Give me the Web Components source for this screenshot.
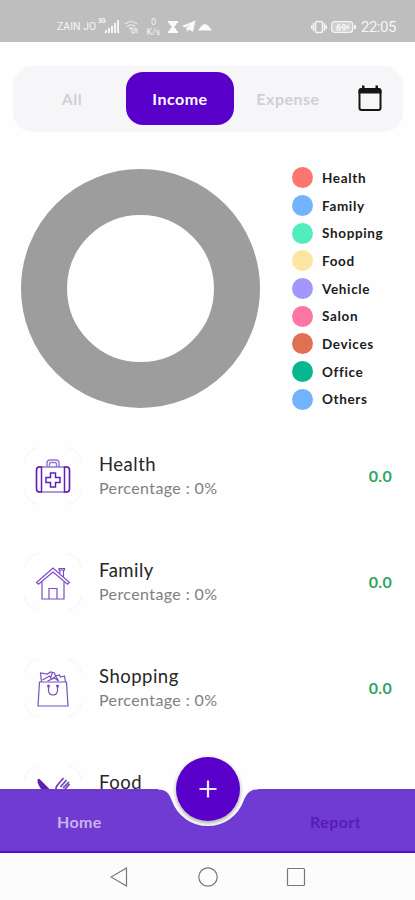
<!DOCTYPE html>
<html lang="en">
<head>
<meta charset="utf-8">
<meta name="viewport" content="width=device-width, initial-scale=1">
<title>Report</title>
<style>
  body {
    margin: 0;
    background: #fefefe;
    font-family: Lato, "Open Sans", sans-serif;
    overflow: hidden;
  }
</style>
</head>
<body>
<report-app></report-app>

<script>
function define(name, html, setup) {
  const template = document.createElement('template');
  template.innerHTML = html;
  customElements.define(name, class extends HTMLElement {
    constructor() {
      super();
      this.attachShadow({ mode: 'open' }).appendChild(template.content.cloneNode(true));
    }
    connectedCallback() {
      if (setup) setup(this, this.shadowRoot);
    }
  });
}

define('status-bar', `
  <style>
    :host {
      display: flex;
      align-items: center;
      justify-content: space-between;
      box-sizing: border-box;
      height: 42px;
      padding: 11px 19px 0 57px;
      background: #bebebe;
      color: #f5f5f5;
      font-family: Roboto, sans-serif;
    }
    .side { display: flex; align-items: center; }
    .carrier { font-size: 10.500px; width: 41px; white-space: nowrap; }
    .gen { font-size: 6.500px; font-weight: 700; align-self: flex-start; width: 7px; letter-spacing: -.5px; }
    .speed { font-size: 9px; line-height: 10px; text-align: center; width: 15px; margin: 0 6px 0 6px; }
    .time { font-size: 15px; width: 35px; margin-left: 4px; letter-spacing: -.5px; white-space: nowrap; }
    svg { display: block; }
  </style>
  <div class="side">
    <span class="carrier">ZAIN JO</span>
    <span class="gen">3G</span>
    <svg width="15" height="14" fill="#f5f5f5"><path d="M0 10h2v3H0zM3 8h2v5H3zM6 6h2v7H6zM9 3h2v10H9zM12 0h2v13h-2z"/></svg>
    <svg width="16" height="14" fill="none" stroke="#ececec" stroke-width="1.200" style="margin-left:4px"><path d="M1 4q6-5 12 0M3 6.500q4-3.500 8 0M5 9q2-2 4 0"/><path d="M7 10h6l-2-2M14 12H8l2 2"/></svg>
    <div class="speed"><div>0</div><div>K/s</div></div>
    <svg width="12" height="14" fill="#fafafa"><path d="M1 1h10v2H10q-1 2.500-3 4 2 1.500 3 4h1v2H1v-2h1q1-2.500 3-4-2-1.500-3-4H1z"/></svg>
    <svg width="14" height="13" fill="#fafafa" style="margin-left:3px"><path d="M0 6L13.500.500 11 12 7 9.500 5 11.500 4.500 8 9 4 3.500 7.500z"/></svg>
    <svg width="14" height="8" fill="#fafafa" style="margin-left:2px"><path d="M0 7.500L3 3.500q4-5 8 0l3 4z"/></svg>
  </div>
  <div class="side">
    <svg width="17" height="14" fill="none" stroke="#f5f5f5" stroke-width="1.500"><rect x="4.500" y="1.500" width="7" height="11" rx="1.500"/><path d="M2.500 3v8M13.500 3v8M.7 5v4M15.300 5v4"/></svg>
    <svg width="26" height="14" style="margin-left:3px"><rect x=".7" y="1.700" width="21" height="10.600" rx="3" fill="#cfcfcf" stroke="#f5f5f5" stroke-width="1.300"/><path d="M24 5v4" stroke="#f5f5f5" stroke-width="2"/><text x="5" y="10.500" font-size="9" font-weight="700" fill="#fafafa">69</text><path d="M18 3l-3 4.500h2L16 11l3-4.500h-2z" fill="#fafafa"/></svg>
    <span class="time">22:05</span>
  </div>
`);

define('filter-tabs', `
  <style>
    :host {
      display: grid;
      grid-template-columns: 108px 108px 108px 1fr;
      align-items: center;
      box-sizing: border-box;
      height: 66px;
      margin: 24px 12px 0 13px;
      padding: 0 5px 1px;
      border-radius: 20px;
      background: #f6f6f9;
    }
    ::slotted(*) {
      height: 53px;
      line-height: 54px;
      text-align: center;
      color: #d0d0d2;
      font-size: 16px;
      font-weight: 700;
      letter-spacing: .5px;
    }
    ::slotted([active]) {
      background: #5a00cb;
      border-radius: 17px;
      color: #fff;
    }
    svg { display: block; justify-self: center; }
  </style>
  <slot></slot>
  <svg width="24" height="27" viewBox="0 0 24 27"><path d="M.500 8.500h23V6q0-3-2.500-3h-1V.500h-2.500V3h-11V.500H4V3H3Q.500 3 .500 6z" fill="#151515"/><rect x="1.500" y="4.500" width="21" height="20.500" rx="2" fill="none" stroke="#151515" stroke-width="2"/></svg>
`);

define('donut-chart', `
  <style>
    :host {
      display: block;
      box-sizing: border-box;
      width: 239px;
      height: 239px;
      border: 46px solid #9d9d9d;
      border-radius: 50%;
    }
  </style>
`);

define('legend-item', `
  <style>
    :host {
      display: flex;
      align-items: center;
      gap: 9px;
      height: 27.700px;
      color: #1c1c1c;
      font-size: 13.500px;
      font-weight: 700;
      letter-spacing: .650px;
    }
    .dot { width: 21px; height: 21px; border-radius: 50%; }
  </style>
  <span class="dot"></span>
  <slot></slot>
`, (el, root) => {
  root.querySelector('.dot').style.background = el.getAttribute('color');
});

const icons = {
  health: `
    <g stroke="#9375d2" stroke-width="1.400"><path d="M11.500 8V4q0-3 3-3h6q3 0 3 3v4M14 8V5q0-1.500 1.500-1.500h4Q21 3.500 21 5v3"/><rect x="1" y="8" width="33" height="25" rx="3.500"/></g>
    <g stroke="#6320ba" stroke-width="1.500"><path d="M1 11v19q0 3 2.500 3H6V8H3.500Q1 8 1 11zM34 11v19q0 3-2.500 3H29V8h2.500Q34 8 34 11z"/><path d="M15 14h5v4.500h4.500v5H20V28h-5v-4.500h-4.500v-5H15z"/></g>`,
  family: `
    <g stroke="#7c4bc8" stroke-width="1.200"><path d="M1 17.500L17.500 3 34 17.500l-2 1.700L17.500 7 3 19.200zM6.500 17v17h22V17M13.500 34V23.500h8V34M24.500 8V5h3.500v6.500M23.500 3.500h5.500V5h-5.500z"/></g>`,
  shopping: `
    <g stroke="#7650bd" stroke-width="1.200"><path d="M4 11h27l1.500 24h-30z"/><path d="M6 11l-1-9 7 1 3-2 4 1 1 3 4-1 1 2 4-1 1 6M7 9l7-4 2 3 5-3M12 10l7-3 4 3M21 6l2 4M17 1l-2 6"/><path d="M13 16v3q0 5 4.500 5t4.500-5v-3"/></g>
    <circle cx="13" cy="15" r="1.500" fill="#7650bd"/><circle cx="22" cy="15" r="1.500" fill="#7650bd"/>`,
  food: `
    <path d="M2 4q0-3 2-2l15 15-3 3q-5-1-8-5Q2 8 2 4z" fill="#5d20aa"/>
    <path d="M4 33L22 14M28 1l-6 7q-3 4 0 6 2 3 6 0l6-7M31 3l-6 7M33.500 5l-6 6" stroke="#7040b4" stroke-width="1.700"/>
    <path d="M18 20l13 13" stroke="#5d20aa" stroke-width="4"/>`
};

define('category-row', `
  <style>
    :host {
      display: grid;
      grid-template-columns: 58px 1fr auto;
      column-gap: 17px;
      align-items: center;
      height: 106px;
      padding: 0 23px 0 24px;
    }
    svg { display: block; fill: none; }
    .name { color: #262626; font-size: 18.500px; line-height: 24px; letter-spacing: .5px; }
    .percent { color: #808080; font-size: 16px; line-height: 23px; height: 23px; letter-spacing: .4px; }
    .amount { color: #30a560; font-size: 16px; font-weight: 700; letter-spacing: .3px; }
  </style>
  <div class="tile"></div>
  <div>
    <div class="name"></div>
    <div class="percent"><slot></slot></div>
  </div>
  <div class="amount"></div>
`, (el, root) => {
  // faint rounded corners of the tile, with the icon in the middle
  root.querySelector('.tile').innerHTML =
    '<svg width="58" height="58" viewBox="-11.500 -12 58 58">' +
    '<path d="M-11 3Q-9-9 3-11.500M32-11.500Q44-9 46 3M46 31Q44 43 32 45.500M3 45.500Q-9 43-11 31" stroke="#f3f3f3"/>' +
    icons[el.getAttribute('icon')] + '</svg>';
  root.querySelector('.name').textContent = el.getAttribute('name');
  root.querySelector('.amount').textContent = el.getAttribute('amount') || '';
});

define('bottom-bar', `
  <style>
    :host { display: block; position: relative; height: 64px; flex: none; }
    .shape { position: absolute; left: 0; top: 0; display: block; }
    .links {
      position: relative;
      display: flex;
      justify-content: space-between;
      padding: 0 54px 0 57px;
      line-height: 66px;
      font-size: 16px;
      font-weight: 700;
      letter-spacing: .4px;
      color: #c8b5e9;
    }
    .current { color: #571bb8; }
    .fab {
      position: absolute;
      left: 175.700px;
      top: -32px;
      width: 64px;
      height: 64px;
      border-radius: 50%;
      background: #5a00cb;
      box-shadow: 0 2px 4px rgba(0, 0, 0, .36);
      display: grid;
      place-items: center;
    }
  </style>
  <svg class="shape" width="415" height="64"><path d="M0 .500H158C166 .500 169 4 172 12A38 38 0 0 0 243.500 12C247 4 250 .500 258 .500H415V64H0z" fill="#6f3bd3"/><path d="M0 .700H158M258 .700H415" stroke="#6128ce"/><path d="M0 63H415" stroke="#5a0bc4" stroke-width="2"/></svg>
  <div class="links"><span>Home</span><span class="current">Report</span></div>
  <div class="fab"><svg width="18" height="18"><path d="M9 .500v17M.500 9h17" stroke="#f2eafa" stroke-width="2.200"/></svg></div>
`);

define('system-nav', `
  <style>
    :host {
      display: flex;
      flex: none;
      align-items: center;
      justify-content: center;
      gap: 68px;
      height: 47px;
      background: #fcfcfc;
    }
    svg { display: block; fill: none; stroke: #777; stroke-width: 1.200; }
  </style>
  <svg width="20" height="20"><path d="M16.500 1v18L1 10z"/></svg>
  <svg width="20" height="20"><circle cx="10" cy="10" r="9.200"/></svg>
  <svg width="20" height="20"><rect x="1.500" y="1.500" width="17" height="17" rx="1"/></svg>
`);

define('report-app', `
  <style>
    :host { display: flex; flex-direction: column; width: 415px; height: 900px; }
    .summary { display: flex; gap: 32px; align-items: flex-start; padding: 32px 0 0 21px; }
    .chart { padding-top: 5px; }
    .list { flex: 1; min-height: 0; margin-top: 9.500px; overflow: hidden; }
  </style>
  <status-bar></status-bar>
  <filter-tabs><span>All</span><span active>Income</span><span>Expense</span></filter-tabs>
  <div class="summary">
    <div class="chart"><donut-chart></donut-chart></div>
    <div>
      <legend-item color="#fc7671">Health</legend-item>
      <legend-item color="#72b4fc">Family</legend-item>
      <legend-item color="#53edbd">Shopping</legend-item>
      <legend-item color="#fde6a3">Food</legend-item>
      <legend-item color="#a298fc">Vehicle</legend-item>
      <legend-item color="#fc75a4">Salon</legend-item>
      <legend-item color="#df7052">Devices</legend-item>
      <legend-item color="#06b78f">Office</legend-item>
      <legend-item color="#72b4fc">Others</legend-item>
    </div>
  </div>
  <div class="list">
    <category-row icon="health" name="Health" amount="0.0">Percentage : 0%</category-row>
    <category-row icon="family" name="Family" amount="0.0">Percentage : 0%</category-row>
    <category-row icon="shopping" name="Shopping" amount="0.0">Percentage : 0%</category-row>
    <category-row icon="food" name="Food"></category-row>
  </div>
  <bottom-bar></bottom-bar>
  <system-nav></system-nav>
`);
</script>
</body>
</html>
